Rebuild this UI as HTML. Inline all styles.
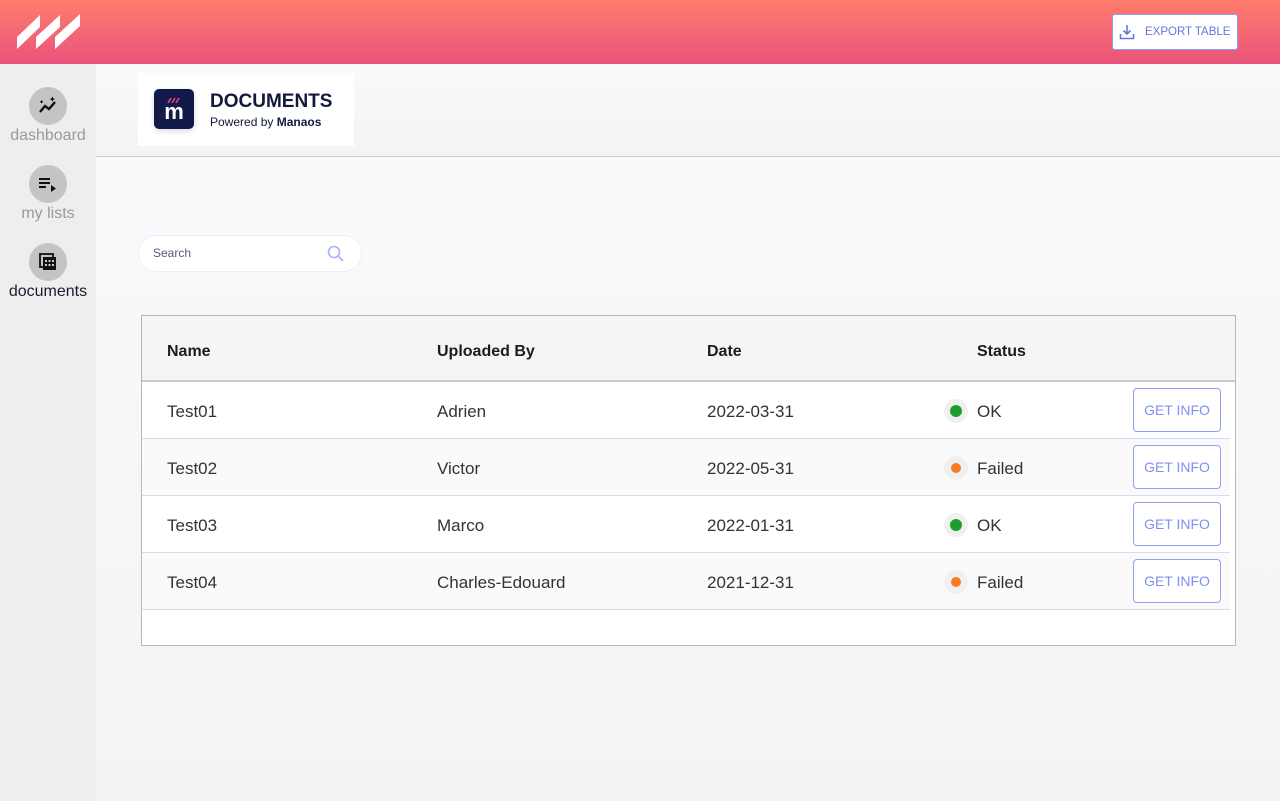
<!DOCTYPE html>
<html><head><style>
*{margin:0;padding:0;box-sizing:border-box}
body{width:1280px;height:801px;overflow:hidden;font-family:"Liberation Sans",sans-serif;background:#f4f4f6;position:relative}
.top{position:absolute;left:0;top:0;width:1280px;height:64px;background:linear-gradient(#ff7d6b,#e9537c)}
.side{position:absolute;left:0;top:64px;width:96px;height:737px;background:#eeeeee}
.nav{position:absolute;left:0;width:96px;text-align:center;font-size:16px}
.nav .c{width:38px;height:38px;border-radius:50%;background:#c4c4c4;margin:0 auto 2px;display:flex;align-items:center;justify-content:center}
.main{position:absolute;left:96px;top:64px;width:1184px;height:736px;background:linear-gradient(#fbfbfd,#f3f3f4)}
.hdr{position:absolute;left:96px;top:64px;width:1184px;height:93px;border-bottom:1px solid #ccc;background:linear-gradient(#fafafa,#f3f3f3)}
.card{position:absolute;left:138px;top:73px;width:216px;height:73px;background:#fff}
.exp{position:absolute;left:1112px;top:14px;width:126px;height:36px;background:#fff;border:1px solid #8ea0f5;border-radius:3px;color:#6676e0;font-size:11.5px;display:flex;align-items:center;padding-left:6px}
.search{position:absolute;left:138px;top:235px;width:224px;height:37px;background:#fff;border:1px solid #eceefa;border-radius:18px;font-size:12px;color:#555a7a;padding:10px 0 0 14px}
.tbl{position:absolute;left:141px;top:315px;width:1095px;height:331px;background:#fff;border:1px solid #b8b8bc}
.th{height:66px;background:#f5f5f6;border-bottom:2px solid #c8cad6;position:relative;font-weight:bold;font-size:16px;color:#1c1c1c}
.th .cell{top:calc(50% + 4px)}
.row{height:57px;border-bottom:1px solid #d6daea;position:relative;font-size:17px;color:#333;width:1088px}
.cell{position:absolute;top:calc(50% + 2px);transform:translateY(-50%)}
.dot{position:absolute;left:802px;top:17px;width:24px;height:24px;border-radius:50%;background:#f0f0f0}
.dot i{position:absolute;left:6px;top:6px;width:12px;height:12px;border-radius:50%}
.btn{position:absolute;left:991px;top:6px;width:88px;height:44px;border:1px solid #8ea0f5;border-radius:4px;color:#8190ee;font-size:14px;text-align:center;line-height:42px;background:#fff}
</style></head><body>
<div class="top">
<svg style="position:absolute;left:0;top:0" width="90" height="64"><g fill="#fff"><polygon points="17,49 17,37 40,15 40,27"/><polygon points="36,49 36,37 60,15 60,27"/><polygon points="55,49 55,37 80,14 80,26"/></g></svg>
<div class="exp"><svg width="16" height="16" viewBox="0 0 16 16" fill="none" stroke="#6676e0" stroke-width="1.6"><path d="M8 1v9M4.5 6.5 8 10l3.5-3.5M1.5 10v4.5h13V10"/></svg><span style="margin-left:10px">EXPORT TABLE</span></div>
</div>
<div class="side"></div>
<div class="nav" style="top:87px;color:#9a9a9a"><div class="c"><svg width="22" height="20" viewBox="0 0 22 20"><path d="M3 16l5-6 4 3 6-7" stroke="#111" stroke-width="2.4" fill="none"/><text x="12" y="6" font-size="8">✦</text><text x="2" y="8" font-size="6">✦</text></svg></div>dashboard</div>
<div class="nav" style="top:165px;color:#9a9a9a"><div class="c"><svg width="20" height="16"><path d="M1 3h11M1 7h11M1 11h7" stroke="#111" stroke-width="2"/><path d="M13 9l5 3.5-5 3.5z" fill="#111"/></svg></div>my lists</div>
<div class="nav" style="top:243px;color:#1c1c2c"><div class="c"><svg width="20" height="20"><rect x="2" y="2" width="13" height="13" fill="none" stroke="#111" stroke-width="1.8"/><rect x="5" y="5" width="13" height="13" fill="#111"/><g fill="#ccc"><rect x="7" y="8" width="2" height="2"/><rect x="10.5" y="8" width="2" height="2"/><rect x="14" y="8" width="2" height="2"/><rect x="7" y="12" width="2" height="2"/><rect x="10.5" y="12" width="2" height="2"/><rect x="14" y="12" width="2" height="2"/></g></svg></div>documents</div>
<div class="main"></div>
<div class="hdr"></div>
<div class="card">
<div style="position:absolute;left:16px;top:16px;width:40px;height:40px;background:#121a4a;border-radius:5px;color:#fff;font-weight:bold;font-size:22px;text-align:center;line-height:46px;box-shadow:0 2px 6px rgba(0,0,0,.15)">m<svg style="position:absolute;left:13px;top:8px" width="14" height="6"><path d="M1 6l3-5M5 6l3-5M9 6l3-5" stroke="#f0457a" stroke-width="1.6"/></svg></div>
<div style="position:absolute;left:72px;top:18px;font-size:19px;font-weight:bold;color:#121a3a">DOCUMENTS</div>
<div style="position:absolute;left:72px;top:42px;font-size:12px;color:#121a3a">Powered by <b>Manaos</b></div>
</div>
<div class="search">Search<svg style="position:absolute;left:188px;top:9px" width="18" height="18"><circle cx="7" cy="7" r="5.5" fill="none" stroke="#a4b4f4" stroke-width="1.6"/><path d="M11 11l5 5" stroke="#a4b4f4" stroke-width="1.8"/></svg></div>
<div class="tbl">
<div class="th"><span class="cell" style="left:25px">Name</span><span class="cell" style="left:295px">Uploaded By</span><span class="cell" style="left:565px">Date</span><span class="cell" style="left:835px">Status</span></div>
<div>
<div class="row" style="background:#fff"><span class="cell" style="left:25px">Test01</span><span class="cell" style="left:295px">Adrien</span><span class="cell" style="left:565px">2022-03-31</span><div class="dot"><i style="background:#1e9e2e"></i></div><span class="cell" style="left:835px">OK</span><div class="btn">GET INFO</div></div>
<div class="row" style="background:#fafafa"><span class="cell" style="left:25px">Test02</span><span class="cell" style="left:295px">Victor</span><span class="cell" style="left:565px">2022-05-31</span><div class="dot"><i style="background:#f57c1f;width:10px;height:10px;left:7px;top:7px"></i></div><span class="cell" style="left:835px">Failed</span><div class="btn">GET INFO</div></div>
<div class="row" style="background:#fff"><span class="cell" style="left:25px">Test03</span><span class="cell" style="left:295px">Marco</span><span class="cell" style="left:565px">2022-01-31</span><div class="dot"><i style="background:#1e9e2e"></i></div><span class="cell" style="left:835px">OK</span><div class="btn">GET INFO</div></div>
<div class="row" style="background:#fafafa"><span class="cell" style="left:25px">Test04</span><span class="cell" style="left:295px">Charles-Edouard</span><span class="cell" style="left:565px">2021-12-31</span><div class="dot"><i style="background:#f57c1f;width:10px;height:10px;left:7px;top:7px"></i></div><span class="cell" style="left:835px">Failed</span><div class="btn">GET INFO</div></div>
</div>
</div>
</body></html>
